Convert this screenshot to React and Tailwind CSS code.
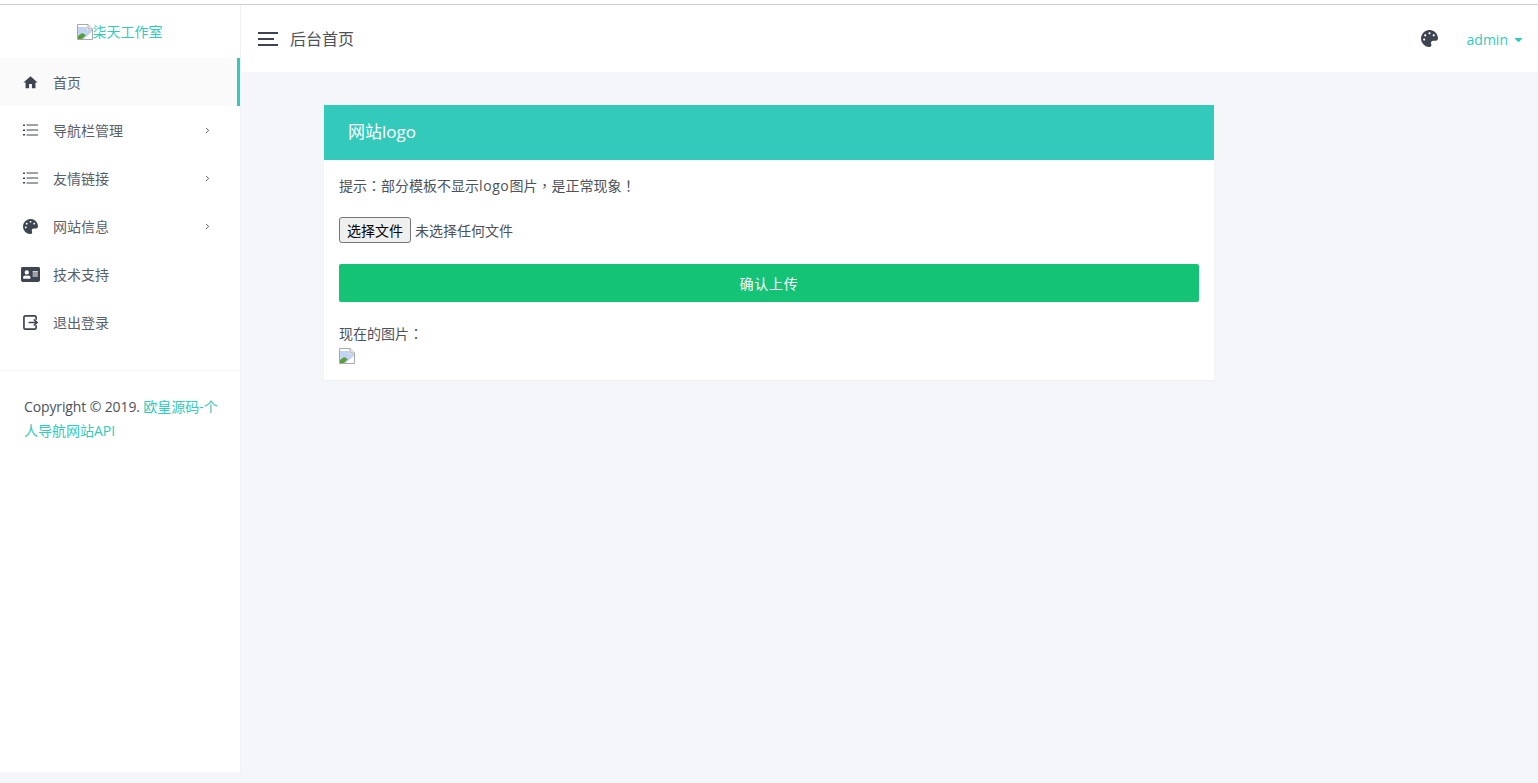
import { FaPalette, FaAddressCard, FaCaretDown } from 'react-icons/fa'
import { ChevronRight } from 'lucide-react'

const cjk = "font-['Open_Sans','Noto_Sans_CJK_SC',sans-serif]"

const BrokenImage = () => (
    <svg width="16" height="16" viewBox="0 0 16 16" className="shrink-0">
        <path d="M.5 .5H11L15.500 5V15.500H.5Z" fill="#fff" stroke="#a8a8a8" />
        <path d="M11 .5V5H15.500" fill="#e8e8e8" stroke="#a8a8a8" />
        <path d="M1 3H10V6H15V8L7 15H1Z" fill="#c3d4f2" />
        <path d="M1 15V12L5 9L9 11L5 15Z" fill="#5a9e3c" />
        <path d="M7 15L15 8V15Z" fill="#fff" />
    </svg>
)

const HomeIcon = () => (
    <svg width="17" height="17" viewBox="0 0 24 24" fill="#3f4550">
        <path d="M10 20v-6h4v6h5v-8h3L12 3 2 12h3v8z" />
    </svg>
)

const ListIcon = () => (
    <svg width="15" height="12" viewBox="0 0 15 12" fill="#3f4550">
        <rect x="0" y="0.500" width="2" height="1.500" />
        <rect x="3.500" y="0.500" width="11.500" height="1" />
        <rect x="0" y="5.500" width="2" height="1.500" />
        <rect x="3.500" y="5.500" width="11.500" height="1" />
        <rect x="0" y="10" width="2" height="1.500" />
        <rect x="3.500" y="10.500" width="11.500" height="1" />
    </svg>
)

const LogoutIcon = () => (
    <svg width="15" height="15" viewBox="0 0 16 16" fill="none" stroke="#3f4550" strokeWidth="1.8">
        <path d="M14 5V2.500A1.500 1.500 0 0 0 12.500 1H2.500A1.500 1.500 0 0 0 1 2.500V13.500A1.500 1.500 0 0 0 2.500 15H12.500A1.500 1.500 0 0 0 14 13.500V11" />
        <path d="M6 8H15M11.500 4.800L15 8L11.500 11.200" />
    </svg>
)

const menu = [
    { label: '首页', icon: <HomeIcon />, active: true },
    { label: '导航栏管理', icon: <ListIcon />, arrow: true },
    { label: '友情链接', icon: <ListIcon />, arrow: true },
    { label: '网站信息', icon: <FaPalette size={15} color="#3f4550" />, arrow: true },
    { label: '技术支持', icon: <FaAddressCard size={19} color="#3f4550" /> },
    { label: '退出登录', icon: <LogoutIcon /> },
]

// centred full-width punctuation, as the reference's font draws it
const Punct = ({ children }) => <span className="font-['Noto_Sans_CJK_TC',sans-serif]">{children}</span>

const MenuItem = ({ item }) => (
    <a className={`flex h-12 items-center pl-5 pr-7 text-sm text-[#595f69] ${item.active ? 'border-r-[3px] border-[#33cabb] bg-[#fafafa]' : ''}`}>
        <span className="flex w-[20px] justify-center">{item.icon}</span>
        <span className="ml-[13px] flex-1 pt-[2px]">{item.label}</span>
        {item.arrow && <ChevronRight size={9} color="#4d5259" strokeWidth={2.5} className="mt-[1px]" />}
    </a>
)

const App = () => {
    return (
        <div className={`flex h-[783px] flex-col overflow-hidden bg-[#f4f6fa] ${cjk}`}>
            <div className="h-[5px] shrink-0 border-b border-[#cfcfcf] bg-white"></div>
            <div className="flex min-h-0 flex-1">
                {/* Sidebar */}
                <aside className="flex h-[767px] w-[241px] shrink-0 flex-col border-r border-[#eef0f5] bg-white">
                    <div className="flex h-[53px] items-center justify-center pr-[1px] text-sm text-[#33cabb]">
                        <BrokenImage />
                        <span>柒天工作室</span>
                    </div>
                    <nav className="border-b border-[#f4f5f7] pb-6">
                        {menu.map((item) => <MenuItem key={item.label} item={item} />)}
                    </nav>
                    <p className="pl-6 pr-4 pt-6 text-sm leading-6 text-[#4d5259]">
                        <span className="tracking-[-0.12px]">Copyright © 2019. </span><span className="text-[#33cabb]">欧皇源码-个人导航网站API</span>
                    </p>
                </aside>

                <div className="min-w-0 flex-1">
                    {/* Top bar */}
                    <header className="flex h-[67px] items-center bg-white pl-[17px] pr-[13px]">
                        <div className="flex w-5 flex-col gap-[4px]">
                            <span className="h-[2px] w-5 bg-[#3f4550]"></span>
                            <span className="h-[2px] w-4 bg-[#3f4550]"></span>
                            <span className="h-[2px] w-5 bg-[#3f4550]"></span>
                        </div>
                        <span className="ml-[12px] text-base text-[#4d5259]">后台首页</span>
                        <FaPalette size={17} color="#3f4550" className="ml-auto" />
                        <span className="ml-[29px] pt-[2px] text-sm text-[#33cabb]">admin</span>
                        <FaCaretDown size={13} color="#33cabb" className="ml-[4px] mt-[2px]" />
                    </header>

                    {/* Card */}
                    <div className="pl-[83px] pt-[33px]">
                        <section className="w-[890px] bg-white shadow-[0_1px_2px_rgba(0,0,0,0.04)]">
                            <div className="flex h-[55px] items-center bg-[#33cabb] px-6 pb-[2px] text-[17px] text-white">网站logo</div>
                            <div className="px-[15px] pb-[15px] pt-[15px]">
                                <p className="text-sm leading-5 text-[#4d5259]">提示<Punct>：</Punct>部分模板不显示<span className="tracking-[0.6px]">logo</span>图片<Punct>，</Punct>是正常现象<Punct>！</Punct></p>
                                <div className="mt-[21px] flex items-center">
                                    <button className="h-[26px] w-[72px] rounded-[3px] border border-[#767676] bg-[#efefef] pt-[1px] text-sm text-black">选择文件</button>
                                    <span className="ml-1 pt-[1px] text-sm text-[#4d5259]">未选择任何文件</span>
                                </div>
                                <button className="mt-[21px] h-[38px] w-full rounded-[2px] bg-[#15c377] pt-[1px] text-sm tracking-[0.75px] text-white">确认上传</button>
                                <p className="mt-[21px] text-sm leading-5 text-[#4d5259]">现在的图片<Punct>：</Punct></p>
                                <div className="mt-[4px] h-[17px]"><BrokenImage /></div>
                            </div>
                        </section>
                    </div>
                </div>
            </div>
        </div>
    )
}
export default App
